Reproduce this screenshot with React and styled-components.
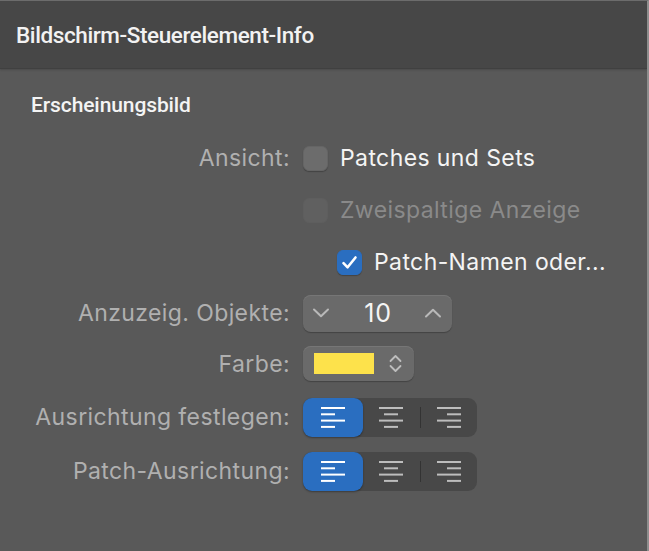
import React, { useState } from "react";
import styled, { createGlobalStyle } from "styled-components";

const GlobalStyle = createGlobalStyle`
  html, body {
    margin: 0;
    padding: 0;
    background: #595959;
  }
  body {
    font-family: Inter, "Noto Sans", "Liberation Sans", sans-serif;
    -webkit-font-smoothing: antialiased;
  }
`;

const Window = styled.div`
  width: 649px;
  height: 551px;
  box-sizing: border-box;
  background: #595959;
  border-top: 1px solid #6c6c6c;
  border-right: 2px solid #8e8e8e;
  display: flex;
  flex-direction: column;
  overflow: hidden;
`;

const Header = styled.header`
  height: 68px;
  flex: none;
  background: #474747;
  border-bottom: 1px solid #404040;
  box-shadow: 0 1px 2px rgba(0, 0, 0, 0.18);
  display: flex;
  align-items: center;
  padding: 0 16px 0;
  box-sizing: border-box;
`;

const Title = styled.h1`
  margin: 0;
  font-family: Roboto, "Liberation Sans", sans-serif;
  font-size: 22.5px;
  font-weight: 500;
  color: #f2f2f2;
  letter-spacing: -0.4px;
`;

const Body = styled.section`
  padding: 22px 0 0 31px;
`;

const SectionTitle = styled.h2`
  margin: 0;
  font-family: Roboto, "Liberation Sans", sans-serif;
  font-size: 21px;
  font-weight: 500;
  color: #f4f4f4;
  height: 28px;
  line-height: 28px;
  letter-spacing: -0.1px;
`;

const Form = styled.div`
  display: grid;
  grid-template-columns: 259px 1fr;
  grid-template-rows: 52px 52px 52px 50px 51px 56px 52px;
  column-gap: 13px;
  margin-top: 13px;
`;

const Label = styled.div`
  font-size: 23px;
  letter-spacing: 0.4px;
  color: #b0b0b0;
  text-align: right;
  align-self: center;
  white-space: nowrap;
`;

const Cell = styled.div`
  grid-column: 2;
  display: flex;
  align-items: center;
  padding-left: ${(p) => p.$indent || 0}px;
`;

const CheckRow = styled.label`
  display: flex;
  align-items: center;
  gap: 12px;
  font-size: 23px;
  letter-spacing: 0.4px;
  white-space: nowrap;
  color: ${(p) => (p.$disabled ? "#8a8a8a" : "#f4f4f4")};
  cursor: ${(p) => (p.$disabled ? "default" : "pointer")};
`;

const Box = styled.span`
  width: 25px;
  height: 25px;
  flex: none;
  box-sizing: border-box;
  border-radius: 6px;
  display: flex;
  align-items: center;
  justify-content: center;
  background: ${(p) =>
    p.$checked ? "#2a6ec0" : p.$disabled ? "#606060" : "#6c6c6c"};
  border: 1px solid
    ${(p) => (p.$checked ? "#2a6ec0" : p.$disabled ? "#5e5e5e" : "#656565")};
  box-shadow: ${(p) =>
    p.$disabled ? "none" : "0 1px 1px rgba(0, 0, 0, 0.25)"};
`;

const Stepper = styled.div`
  width: 149px;
  height: 37px;
  box-sizing: border-box;
  border-radius: 8px;
  background: #6a6a6a;
  box-shadow: inset 0 1px 0 #767676, 0 1px 1px rgba(0, 0, 0, 0.25);
  display: flex;
  align-items: center;
  justify-content: space-between;
  padding: 0 10px 0 9px;
`;

const StepValue = styled.span`
  font-size: 25px;
  letter-spacing: 0.8px;
  color: #f4f4f4;
  margin-left: 2px;
`;

const IconButton = styled.button`
  border: 0;
  background: none;
  padding: 0;
  display: flex;
  cursor: pointer;
`;

const ColorWell = styled.div`
  width: 111px;
  height: 35px;
  box-sizing: border-box;
  border-radius: 8px;
  background: #6a6a6a;
  box-shadow: inset 0 1px 0 #767676, 0 1px 1px rgba(0, 0, 0, 0.25);
  display: flex;
  align-items: center;
  padding: 0 11px;
  gap: 14px;
`;

const Swatch = styled.span`
  width: 60px;
  height: 21px;
  background: ${(p) => p.$color};
`;

const Segmented = styled.div`
  width: 174px;
  height: 39px;
  box-sizing: border-box;
  border-radius: 9px;
  background: #484848;
  display: flex;
  align-items: stretch;
`;

const Segment = styled.button`
  flex: ${(p) => (p.$first ? "0 0 60px" : "1")};
  border: 0;
  padding: 0;
  display: flex;
  align-items: center;
  justify-content: center;
  cursor: pointer;
  border-radius: 9px;
  background: ${(p) => (p.$active ? "#2a6ec0" : "transparent")};
  box-shadow: ${(p) => (p.$active ? "0 1px 2px rgba(0,0,0,0.35)" : "none")};
  color: ${(p) => (p.$active ? "#ffffff" : "#bdbdbd")};
`;

const Divider = styled.span`
  width: 1px;
  height: 21px;
  align-self: center;
  background: #333;
`;

const Check = () => (
  <svg width="17" height="15" viewBox="0 0 17 15">
    <path
      d="M2.5 8.2 L6.6 12.3 L14.5 2.5"
      fill="none"
      stroke="#fff"
      strokeWidth="2.6"
      strokeLinecap="round"
      strokeLinejoin="round"
    />
  </svg>
);

const Chevron = ({ up }) => (
  <svg width="18" height="10" viewBox="0 0 18 10">
    <path
      d={up ? "M2 8.5 L9 1.8 L16 8.5" : "M2 1.5 L9 8.2 L16 1.5"}
      fill="none"
      stroke="#b9b9b9"
      strokeWidth="2"
      strokeLinecap="round"
      strokeLinejoin="round"
    />
  </svg>
);

const UpDown = () => (
  <svg width="15" height="21" viewBox="0 0 15 21">
    <path
      d="M2.5 8 L7.5 3 L12.5 8 M2.5 13 L7.5 18 L12.5 13"
      fill="none"
      stroke="#bdbdbd"
      strokeWidth="1.8"
      strokeLinecap="round"
      strokeLinejoin="round"
    />
  </svg>
);

// four text lines, long/short alternating, anchored left, centre or right
const AlignIcon = ({ align }) => {
  const long = 24;
  const short = 14;
  const x = (w) =>
    align === "left" ? 1 : align === "right" ? 25 - w : (26 - w) / 2;
  const rows = [long, short, long, short].map((w, i) => (
    <line
      key={i}
      x1={x(w)}
      x2={x(w) + w}
      y1={2 + i * 6.3}
      y2={2 + i * 6.3}
      stroke="currentColor"
      strokeWidth="2"
    />
  ));
  return (
    <svg width="26" height="23" viewBox="0 0 26 23">
      {rows}
    </svg>
  );
};

const AlignControl = ({ value, onChange }) => (
  <Segmented>
    <Segment $first $active={value === "left"} onClick={() => onChange("left")}>
      <AlignIcon align="left" />
    </Segment>
    <Segment $active={value === "center"} onClick={() => onChange("center")}>
      <AlignIcon align="center" />
    </Segment>
    <Divider />
    <Segment $active={value === "right"} onClick={() => onChange("right")}>
      <AlignIcon align="right" />
    </Segment>
  </Segmented>
);

const App = () => {
  const [patches, setPatches] = useState(false);
  const [names, setNames] = useState(true);
  const [count, setCount] = useState(10);
  const [align, setAlign] = useState("left");
  const [patchAlign, setPatchAlign] = useState("left");

  return (
    <>
      <GlobalStyle />
      <Window>
        <Header>
          <Title>Bildschirm-Steuerelement-Info</Title>
        </Header>
        <Body>
          <SectionTitle>Erscheinungsbild</SectionTitle>
          <Form>
            <Label>Ansicht:</Label>
            <Cell>
              <CheckRow onClick={() => setPatches(!patches)}>
                <Box $checked={patches}>{patches && <Check />}</Box>
                Patches und Sets
              </CheckRow>
            </Cell>

            <Cell>
              <CheckRow $disabled>
                <Box $disabled />
                Zweispaltige Anzeige
              </CheckRow>
            </Cell>

            <Cell $indent={34}>
              <CheckRow onClick={() => setNames(!names)}>
                <Box $checked={names}>{names && <Check />}</Box>
                Patch-Namen oder...
              </CheckRow>
            </Cell>

            <Label>Anzuzeig. Objekte:</Label>
            <Cell>
              <Stepper>
                <IconButton onClick={() => setCount(Math.max(0, count - 1))}>
                  <Chevron />
                </IconButton>
                <StepValue>{count}</StepValue>
                <IconButton onClick={() => setCount(count + 1)}>
                  <Chevron up />
                </IconButton>
              </Stepper>
            </Cell>

            <Label>Farbe:</Label>
            <Cell>
              <ColorWell>
                <Swatch $color="#fde24b" />
                <UpDown />
              </ColorWell>
            </Cell>

            <Label>Ausrichtung festlegen:</Label>
            <Cell>
              <AlignControl value={align} onChange={setAlign} />
            </Cell>

            <Label>Patch-Ausrichtung:</Label>
            <Cell>
              <AlignControl value={patchAlign} onChange={setPatchAlign} />
            </Cell>
          </Form>
        </Body>
      </Window>
    </>
  );
};

export default App;
